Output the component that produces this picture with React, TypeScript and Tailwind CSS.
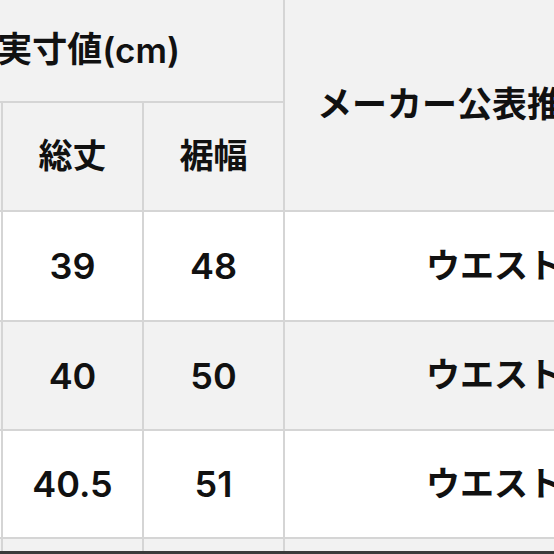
const cjk = "font-['Liberation_Sans','Noto_Sans_CJK_JP',sans-serif] font-semibold";
const num = "font-['Inter','Noto_Sans_CJK_JP',sans-serif] font-semibold";

type Row = { total: string; hem: string; size: string; bg: string; h: string };

const rows: Row[] = [
  { total: "39", hem: "48", size: "ウエスト 61-64", bg: "bg-white", h: "h-[108px]" },
  { total: "40", hem: "50", size: "ウエスト 64-67", bg: "bg-[#f2f2f2]", h: "h-[107px]" },
  { total: "40.5", hem: "51", size: "ウエスト 67-70", bg: "bg-white", h: "h-[106px]" },
];

function VLine() {
  return <div className="w-[2px] shrink-0 bg-[#d5d5d5]" />;
}

function HLine() {
  return <div className="h-[2px] w-full shrink-0 bg-[#d5d5d5]" />;
}

function DataRow({ row }: { row: Row }) {
  return (
    <div className={`flex ${row.h} ${row.bg}`}>
      <div className="w-[1px] shrink-0" />
      <VLine />
      <div className={`flex w-[139px] shrink-0 items-center justify-center text-[36px] ${num}`}>{row.total}</div>
      <VLine />
      <div className={`flex w-[139px] shrink-0 items-center justify-center text-[36px] ${num}`}>{row.hem}</div>
      <VLine />
      <div className={`flex flex-1 items-center whitespace-nowrap pl-[141px] text-[34px] ${cjk}`}>{row.size}</div>
    </div>
  );
}

export default function App() {
  return (
    <div className={`flex h-[554px] w-[554px] flex-col overflow-hidden bg-white text-[#111] ${cjk}`}>
      <div className="flex h-[210px] shrink-0 bg-[#f2f2f2]">
        <div className="flex w-[283px] shrink-0 flex-col">
          <div className="flex h-[101px] items-center justify-end overflow-hidden whitespace-nowrap pr-[103px] text-[35px]">
            実寸値<span className={num}>(cm)</span>
          </div>
          <HLine />
          <div className="flex flex-1">
            <div className="w-[1px] shrink-0" />
            <VLine />
            <div className="flex w-[139px] shrink-0 items-center justify-center text-[34px]">総丈</div>
            <VLine />
            <div className="flex w-[139px] shrink-0 items-center justify-center text-[34px]">裾幅</div>
          </div>
        </div>
        <VLine />
        <div className="flex flex-1 items-center whitespace-nowrap pl-[32px] text-[35px]">メーカー公表推奨サイズ</div>
      </div>
      <HLine />
      {rows.map((row, i) => (
        <div key={i} className="flex flex-col">
          <DataRow row={row} />
          <HLine />
        </div>
      ))}
      <div className="flex h-[12px] shrink-0 bg-[#f2f2f2]">
        <div className="w-[1px] shrink-0" />
        <VLine />
        <div className="w-[139px] shrink-0" />
        <VLine />
        <div className="w-[139px] shrink-0" />
        <VLine />
      </div>
      <div className="h-[3px] shrink-0 bg-[#3a3a3a]" />
    </div>
  );
}
